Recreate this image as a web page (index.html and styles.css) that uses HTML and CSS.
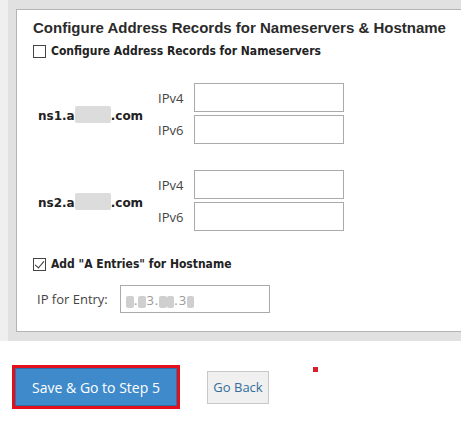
FILE: index.html
```html
<!DOCTYPE html>
<html lang="en">
<head>
  <meta charset="UTF-8" />
  <meta name="viewport" content="width=device-width, initial-scale=1.0"/>
  <title>Configure Address Records</title>
  <link rel="stylesheet" href="styles.css">
</head>
<body>

  <div class="frame">
    <div class="panel">
      <h2>Configure Address Records for Nameservers &amp; Hostname</h2>

      <label class="check-row">
        <input type="checkbox" />
        <span>Configure Address Records for Nameservers</span>
      </label>

      <div class="ns-group first">
        <div class="ns-name">ns1.a<span class="blur wide"></span>.com</div>
        <div class="ns-fields">
          <span class="field-label">IPv4</span>
          <input type="text" />
          <span class="field-label">IPv6</span>
          <input type="text" />
        </div>
      </div>

      <div class="ns-group">
        <div class="ns-name">ns2.a<span class="blur wide"></span>.com</div>
        <div class="ns-fields">
          <span class="field-label">IPv4</span>
          <input type="text" />
          <span class="field-label">IPv6</span>
          <input type="text" />
        </div>
      </div>

      <label class="check-row second">
        <input type="checkbox" checked />
        <span>Add "A Entries" for Hostname</span>
      </label>

      <div class="entry-row">
        <span class="field-label">IP for Entry:</span>
        <div class="entry-input">
          <span class="blur"></span>.<span class="blur"></span>3.<span class="blur"></span><span class="blur small"></span>.3<span class="blur small"></span>
        </div>
      </div>
    </div>
  </div>

  <div class="actions">
    <button class="btn-save">Save &amp; Go to Step 5</button>
    <button class="btn-back">Go Back</button>
  </div>

  <span class="red-dot"></span>

</body>
</html>
```

FILE: styles.css
```css
body {
  margin: 0;
  padding: 0;
  background: #fff;
  font-family: "Open Sans", Arial, sans-serif;
  position: relative;
}

.frame {
  background: #e1e1e1;
  border-left: 8px solid #efefef;
  padding: 9px 0 9px 8px;
  overflow: hidden;
}

.panel {
  background: #fff;
  border: 1px solid #b4b4b4;
  border-right: none;
  padding: 9px 0 18px 16px;
}

.panel h2 {
  margin: 0;
  font-family: "Liberation Sans", Arial, sans-serif;
  font-size: 15px;
  line-height: 18px;
  font-weight: bold;
  color: #2b2b2b;
}

.check-row {
  display: flex;
  align-items: center;
  height: 16px;
  margin-top: 6px;
  font-family: "DejaVu Sans Condensed", "DejaVu Sans", sans-serif;
  font-size: 12px;
  font-weight: bold;
  color: #222;
}

.check-row input {
  appearance: none;
  position: relative;
  width: 13px;
  height: 13px;
  margin: 0 5px 0 0;
  border: 1px solid #444;
  background: #fff;
  flex-shrink: 0;
}

.check-row input:checked::after {
  content: "";
  position: absolute;
  left: 3px;
  top: 0;
  width: 4px;
  height: 8px;
  border: solid #333;
  border-width: 0 1px 1px 0;
  transform: rotate(40deg);
}

.check-row.second {
  margin-top: 25px;
}

.ns-group {
  display: flex;
  align-items: center;
  margin-top: 26px;
  padding-left: 5px;
}

.ns-group.first {
  margin-top: 24px;
}

.ns-name {
  width: 120px;
  padding-top: 4px;
  font-family: "DejaVu Sans", sans-serif;
  font-size: 12px;
  font-weight: bold;
  color: #222;
}

.ns-fields {
  display: grid;
  grid-template-columns: 36px 150px;
  row-gap: 3px;
  align-items: center;
}

.field-label {
  font-size: 13px;
  color: #444;
}

.ns-fields input,
.entry-input {
  box-sizing: border-box;
  width: 150px;
  height: 29px;
  border: 1px solid #aaa;
  background: #fff;
  margin: 0;
}

.blur {
  display: inline-block;
  width: 8px;
  height: 12px;
  vertical-align: middle;
  background: #cfcfcf;
  border-radius: 2px;
  filter: blur(0.6px);
}

.blur.wide {
  width: 36px;
  height: 17px;
  background: #dcdcdc;
  margin-top: -4px;
}

.blur.small {
  width: 7px;
}

.entry-row {
  display: flex;
  align-items: center;
  margin-top: 13px;
  padding-left: 4px;
}

.entry-row .field-label {
  width: 83px;
}

.entry-input {
  height: 28px;
  padding: 5px 0 0 5px;
  font-size: 13px;
  color: #999;
  letter-spacing: 1px;
}

.actions {
  display: flex;
  align-items: center;
  margin-top: 24px;
  padding-left: 12px;
}

.btn-save {
  width: 168px;
  height: 44px;
  background: #3f8acb;
  color: #fff;
  font-family: "Open Sans", Arial, sans-serif;
  font-size: 14px;
  border: 3px solid #e3101b;
  box-shadow: inset 0 0 0 1px #2f6ea8;
  cursor: pointer;
}

.btn-back {
  margin-left: 27px;
  width: 62px;
  height: 33px;
  padding: 0;
  background: #f0f0f0;
  color: #336e9c;
  font-family: "Open Sans", Arial, sans-serif;
  font-size: 13px;
  border: 1px solid #c8c8c8;
  cursor: pointer;
}

.red-dot {
  position: absolute;
  left: 313px;
  top: 367px;
  width: 5px;
  height: 5px;
  background: #d8202a;
}
```
